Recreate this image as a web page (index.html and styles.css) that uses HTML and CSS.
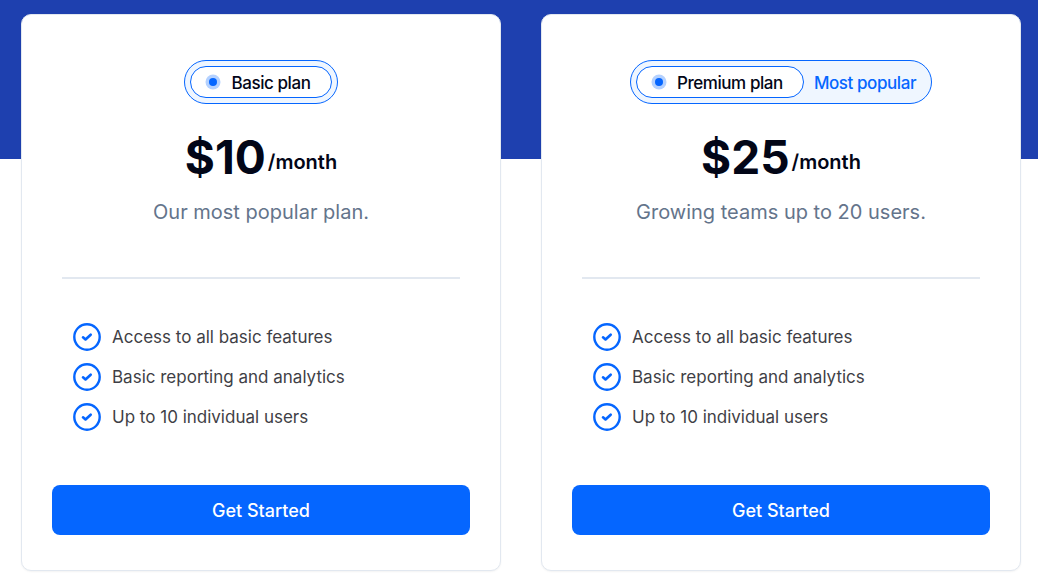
FILE: index.html
```html
<!DOCTYPE html>
<html lang="en">
<head>
<meta charset="utf-8">
<meta name="viewport" content="width=device-width, initial-scale=1">
<title>Pricing</title>
<link rel="stylesheet" href="styles.css">
</head>
<body>
<svg class="sprite" aria-hidden="true">
  <symbol id="check" viewBox="0 0 28 28">
    <circle cx="14" cy="14" r="12.7" fill="none" stroke="currentColor" stroke-width="2.4"/>
    <path d="M10 14.3l2.5 2.2 5.2-4.8" fill="none" stroke="currentColor" stroke-width="2.6" stroke-linecap="round" stroke-linejoin="round"/>
  </symbol>
  <symbol id="dot" viewBox="0 0 16 16">
    <circle cx="8" cy="8" r="7.5" fill="#b4d1ff"/>
    <circle cx="8" cy="8" r="4" fill="#0566ff"/>
  </symbol>
</svg>
<main class="pricing">
  <section class="card">
    <h2 class="badge"><span class="badge-name"><svg class="dot" aria-hidden="true"><use href="#dot"/></svg>Basic plan</span></h2>
    <p class="price"><span class="amount">$10</span><span class="period">/month</span></p>
    <p class="summary">Our most popular plan.</p>
    <hr class="divider">
    <ul class="features">
      <li class="feature"><svg class="icon" aria-hidden="true"><use href="#check"/></svg>Access to all basic features</li>
      <li class="feature"><svg class="icon" aria-hidden="true"><use href="#check"/></svg>Basic reporting and analytics</li>
      <li class="feature"><svg class="icon" aria-hidden="true"><use href="#check"/></svg>Up to 10 individual users</li>
    </ul>
    <button class="cta" type="button">Get Started</button>
  </section>
  <section class="card">
    <h2 class="badge"><span class="badge-name"><svg class="dot" aria-hidden="true"><use href="#dot"/></svg>Premium plan</span><span class="badge-note">Most popular</span></h2>
    <p class="price"><span class="amount">$25</span><span class="period">/month</span></p>
    <p class="summary">Growing teams up to 20 users.</p>
    <hr class="divider">
    <ul class="features">
      <li class="feature"><svg class="icon" aria-hidden="true"><use href="#check"/></svg>Access to all basic features</li>
      <li class="feature"><svg class="icon" aria-hidden="true"><use href="#check"/></svg>Basic reporting and analytics</li>
      <li class="feature"><svg class="icon" aria-hidden="true"><use href="#check"/></svg>Up to 10 individual users</li>
    </ul>
    <button class="cta" type="button">Get Started</button>
  </section>
</main>
</body>
</html>
```
FILE: styles.css
```css
* { box-sizing: border-box; }
body {
  margin: 0;
  background: #fff;
  color: #020617;
  font-family: Inter, "Liberation Sans", sans-serif;
}
.sprite { display: none; }
.pricing {
  display: grid;
  grid-template-columns: 1fr 1fr;
  gap: 40px;
  padding: 14px 17px 12px 21px;
  background: linear-gradient(#1e40af, #1e40af) top / 100% 159px no-repeat;
}
.card {
  display: flex;
  flex-direction: column;
  align-items: center;
  padding: 45px 30px 35px;
  background: #fff;
  border: 1px solid #e2e8f0;
  border-radius: 10px;
  box-shadow: 0 1px 2px rgb(0 0 0 / 5%);
}
.badge {
  display: flex;
  align-items: center;
  margin: 0;
  padding: 5px;
  border: 1px solid #0566ff;
  border-radius: 22px;
  background: #eff6ff;
  font-size: 17px;
  font-weight: 500;
  line-height: 28px;
  letter-spacing: -0.025em;
}
.badge-name {
  display: flex;
  align-items: center;
  gap: 10px;
  padding: 2px 20px 0 14px;
  border: 1px solid #0566ff;
  border-radius: 16px;
  background: #fff;
}
.badge-note { padding: 2px 10px 0; color: #0566ff; }
.dot { width: 16px; height: 16px; margin-bottom: 2px; }
.price {
  display: flex;
  align-items: center;
  gap: 2px;
  margin: 23px 0 0;
  font-weight: 600;
}
.amount { font-size: 46px; font-weight: 700; line-height: 60px; }
.period { padding-top: 9px; font-size: 20px; line-height: 28px; }
.summary {
  margin: 11px 0 0;
  color: #64748b;
  font-size: 20px;
  line-height: 28px;
}
.divider {
  width: calc(100% - 20px);
  height: 2px;
  margin: 51px 0 0;
  border: 0;
  background: #e2e8f0;
}
.features {
  display: grid;
  gap: 12px;
  align-self: stretch;
  margin: 44px 0 0;
  padding: 0 21px;
  list-style: none;
}
.feature {
  display: flex;
  align-items: center;
  gap: 11px;
  color: #3f3f46;
  font-size: 17px;
  line-height: 28px;
}
.icon { width: 28px; height: 28px; color: #0566ff; }
.cta {
  align-self: stretch;
  margin: 54px 0 0;
  padding: 12px 11px 10px;
  border: 0;
  border-radius: 8px;
  background: #0566ff;
  color: #fff;
  font: 500 18px/28px Inter, "Liberation Sans", sans-serif;
}
```
